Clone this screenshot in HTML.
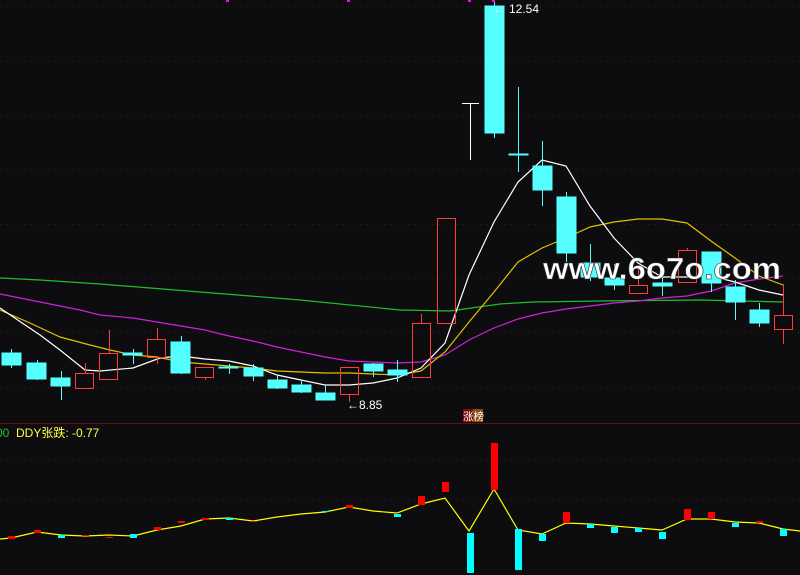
<!DOCTYPE html>
<html><head><meta charset="utf-8"><style>
html,body{margin:0;padding:0;background:#0d0d10;}
svg{display:block;}
text{font-family:"Liberation Sans","Noto Sans CJK SC",sans-serif;}
</style></head><body>
<svg width="800" height="575" viewBox="0 0 800 575" xmlns="http://www.w3.org/2000/svg">
<rect width="800" height="575" fill="#0d0d10"/>
<g stroke="#5a1010" stroke-width="1" stroke-dasharray="1,5" shape-rendering="crispEdges">
<line x1="0" y1="6.5" x2="800" y2="6.5"/><line x1="0" y1="61.5" x2="800" y2="61.5"/>
<line x1="0" y1="115.5" x2="800" y2="115.5"/><line x1="0" y1="169.5" x2="800" y2="169.5"/>
<line x1="0" y1="224.5" x2="800" y2="224.5"/><line x1="0" y1="278.5" x2="800" y2="278.5"/>
<line x1="0" y1="332.5" x2="800" y2="332.5"/><line x1="0" y1="387.5" x2="800" y2="387.5"/>
<line x1="0" y1="460.5" x2="800" y2="460.5"/><line x1="0" y1="499.5" x2="800" y2="499.5"/>
</g>
<line x1="0" y1="423.5" x2="800" y2="423.5" stroke="#6a0d0d"/>
<g fill="#ff00ff"><rect x="226" y="0" width="3" height="2"/><rect x="347" y="0" width="3" height="2"/><rect x="468" y="0" width="3" height="2"/><rect x="492" y="0" width="3" height="2"/></g>
<g fill="none" stroke-width="1.2">
<polyline stroke="#1fbf2a" points="0,278 40,280 100,284 200,292 300,300 400,310 450,311 500,304 533,302 600,301 700,300 783,302"/>
<polyline stroke="#d020d8" points="0,294 40,302 80,310 100,315 133,318 157,322 181,326 205,330 229,336 253,341 277,347 301,352 325,357 349,361 373,362 397,363 421,362 445,355 469,340 494,328 518,319 542,313 566,309 590,306 614,303 638,301 662,298 687,296 711,291 735,283 759,279 783,276"/>
<polyline stroke="#e0c000" points="0,310 30,323 60,337 90,345 110,350 133,355 157,357 181,362 205,364 229,366 253,368 277,371 301,372 325,373 349,373 373,374 397,375 421,371 445,352 469,322 494,292 518,262 542,248 566,238 590,227 614,222 638,219 662,219 687,223 711,241 735,258 759,276 783,285"/>
<polyline stroke="#ffffff" points="0,308 40,335 60,350 85,370 100,371 133,368 160,358 181,356 205,359 229,361 253,366 277,375 301,380 325,385 349,385 373,383 397,378 421,368 445,343 469,275 494,222 518,182 542,160 566,166 590,206 614,238 638,263 662,277 687,277 711,276 735,282 759,290 783,295"/>
</g>
<g shape-rendering="crispEdges">
<g fill="#55ffff" stroke="#55ffff">
<line x1="11.5" y1="349" x2="11.5" y2="368"/><rect x="2" y="353" width="19" height="12"/>
<line x1="37.5" y1="360" x2="37.5" y2="380"/><rect x="27" y="363" width="19" height="16"/>
<line x1="61.5" y1="371" x2="61.5" y2="400"/><rect x="51" y="378" width="19" height="8"/>
<line x1="133.5" y1="349" x2="133.5" y2="364"/><rect x="123" y="353" width="19" height="2"/>
<line x1="181.5" y1="336" x2="181.5" y2="374"/><rect x="171" y="342" width="19" height="31"/>
<line x1="229.5" y1="364" x2="229.5" y2="374"/><rect x="219" y="367" width="19" height="1"/>
<line x1="253.5" y1="364" x2="253.5" y2="381"/><rect x="244" y="368" width="19" height="8"/>
<line x1="277.5" y1="376" x2="277.5" y2="389"/><rect x="268" y="380" width="19" height="8"/>
<line x1="301.5" y1="380" x2="301.5" y2="393"/><rect x="292" y="385" width="19" height="7"/>
<line x1="325.5" y1="385" x2="325.5" y2="400"/><rect x="316" y="393" width="19" height="7"/>
<line x1="373.5" y1="363" x2="373.5" y2="377"/><rect x="364" y="364" width="19" height="7"/>
<line x1="397.5" y1="360" x2="397.5" y2="382"/><rect x="388" y="370" width="19" height="5"/>
<line x1="494.5" y1="2" x2="494.5" y2="138"/><rect x="485" y="6" width="19" height="127"/>
<line x1="518.5" y1="87" x2="518.5" y2="172"/><rect x="509" y="154" width="19" height="1"/>
<line x1="542.5" y1="141" x2="542.5" y2="206"/><rect x="533" y="166" width="19" height="24"/>
<line x1="566.5" y1="192" x2="566.5" y2="262"/><rect x="557" y="197" width="19" height="56"/>
<line x1="590.5" y1="244" x2="590.5" y2="281"/><rect x="581" y="263" width="19" height="14"/>
<line x1="614.5" y1="264" x2="614.5" y2="290"/><rect x="605" y="278" width="19" height="7"/>
<line x1="662.5" y1="274" x2="662.5" y2="296"/><rect x="653" y="283" width="19" height="3"/>
<line x1="711.5" y1="252" x2="711.5" y2="292"/><rect x="702" y="252" width="19" height="31"/>
<line x1="735.5" y1="280" x2="735.5" y2="320"/><rect x="726" y="287" width="19" height="15"/>
<line x1="759.5" y1="303" x2="759.5" y2="327"/><rect x="750" y="310" width="19" height="13"/>
</g>
<g fill="none" stroke="#ff3a3a" stroke-width="1.3">
<line x1="85.5" y1="363" x2="85.5" y2="373"/><rect x="75.5" y="373.5" width="18" height="15"/>
<line x1="109.5" y1="330" x2="109.5" y2="353"/><rect x="99.5" y="353.5" width="18" height="26"/>
<line x1="157.5" y1="328" x2="157.5" y2="339"/><line x1="157.5" y1="357" x2="157.5" y2="364"/><rect x="147.5" y="339.5" width="18" height="18"/>
<line x1="205.5" y1="377" x2="205.5" y2="380"/><rect x="195.5" y="367.5" width="18" height="10"/>
<line x1="349.5" y1="394" x2="349.5" y2="402"/><rect x="340.5" y="367.5" width="18" height="27"/>
<line x1="421.5" y1="314" x2="421.5" y2="323"/><rect x="412.5" y="323.5" width="18" height="54"/>
<rect x="437.5" y="218.5" width="18" height="105"/>
<line x1="638.5" y1="268" x2="638.5" y2="285"/><rect x="629.5" y="285.5" width="18" height="8"/>
<line x1="687.5" y1="248" x2="687.5" y2="250"/><rect x="678.5" y="250.5" width="18" height="32"/>
<line x1="783.5" y1="284" x2="783.5" y2="315"/><line x1="783.5" y1="329" x2="783.5" y2="344"/><rect x="774.5" y="315.5" width="18" height="14"/>
</g>
<g stroke="#ffffff"><line x1="462" y1="103.5" x2="479" y2="103.5"/><line x1="470.5" y1="103" x2="470.5" y2="160"/></g>
</g>
<text x="493" y="13" fill="#ffffff" font-size="12">←</text>
<text x="509" y="13" fill="#ffffff" font-size="12">12.54</text>
<text x="347" y="409" fill="#ffffff" font-size="12">←8.85</text>
<text x="543" y="279" fill="#ffffff" stroke="#333" stroke-width="0.6" font-family="DejaVu Sans,sans-serif" font-weight="bold" font-size="31" textLength="238" lengthAdjust="spacingAndGlyphs">www.6o7o.com</text>
<rect x="463" y="409" width="10" height="13" fill="#7a0a0a"/><rect x="473" y="409" width="10" height="13" fill="#8a4a10"/>
<text x="463" y="420" fill="#ffffff" font-size="10.5" font-family="Noto Sans CJK SC,sans-serif">涨榜</text>
<text x="-4" y="437" fill="#1fbf2a" font-size="12">00</text>
<text x="16" y="437" fill="#ffff44" font-size="12">DDY张跌: -0.77</text>
<polyline fill="none" stroke="#ffff00" stroke-width="1.2" points="0,539 11,538 37,532 61,535 85,536 109,535 133,536 157,530 181,526 205,519 229,518 253,521 277,517 301,514 325,512 349,507 373,511 397,513 421,504 445,498 469,531 494,489 518,530 542,534 566,523 590,524 614,526 638,528 662,530 687,519 711,519 735,522 759,523 783,529 800,531"/>
<g fill="#ff0000" shape-rendering="crispEdges">
<rect x="8" y="536" width="7" height="3"/><rect x="34" y="530" width="7" height="3"/><rect x="82" y="535" width="7" height="1"/><rect x="106" y="537" width="7" height="1"/><rect x="154" y="527" width="7" height="3"/><rect x="178" y="521" width="7" height="2"/><rect x="202" y="518" width="7" height="2"/><rect x="250" y="521" width="7" height="1"/><rect x="346" y="505" width="7" height="3"/><rect x="418" y="496" width="7" height="9"/><rect x="442" y="482" width="7" height="10"/><rect x="491" y="443" width="7" height="47"/><rect x="563" y="512" width="7" height="11"/><rect x="684" y="509" width="7" height="11"/><rect x="708" y="512" width="7" height="7"/><rect x="756" y="521" width="7" height="2"/>
</g>
<g fill="#00ffff" shape-rendering="crispEdges">
<rect x="58" y="535" width="7" height="3"/><rect x="130" y="534" width="7" height="4"/><rect x="226" y="518" width="7" height="2"/><rect x="322" y="511" width="7" height="1"/><rect x="394" y="514" width="7" height="3"/><rect x="467" y="533" width="7" height="40"/><rect x="515" y="529" width="7" height="41"/><rect x="539" y="534" width="7" height="7"/><rect x="587" y="524" width="7" height="4"/><rect x="611" y="527" width="7" height="6"/><rect x="635" y="528" width="7" height="4"/><rect x="659" y="532" width="7" height="7"/><rect x="732" y="523" width="7" height="4"/><rect x="780" y="529" width="7" height="7"/>
</g>
</svg>
</body></html>
